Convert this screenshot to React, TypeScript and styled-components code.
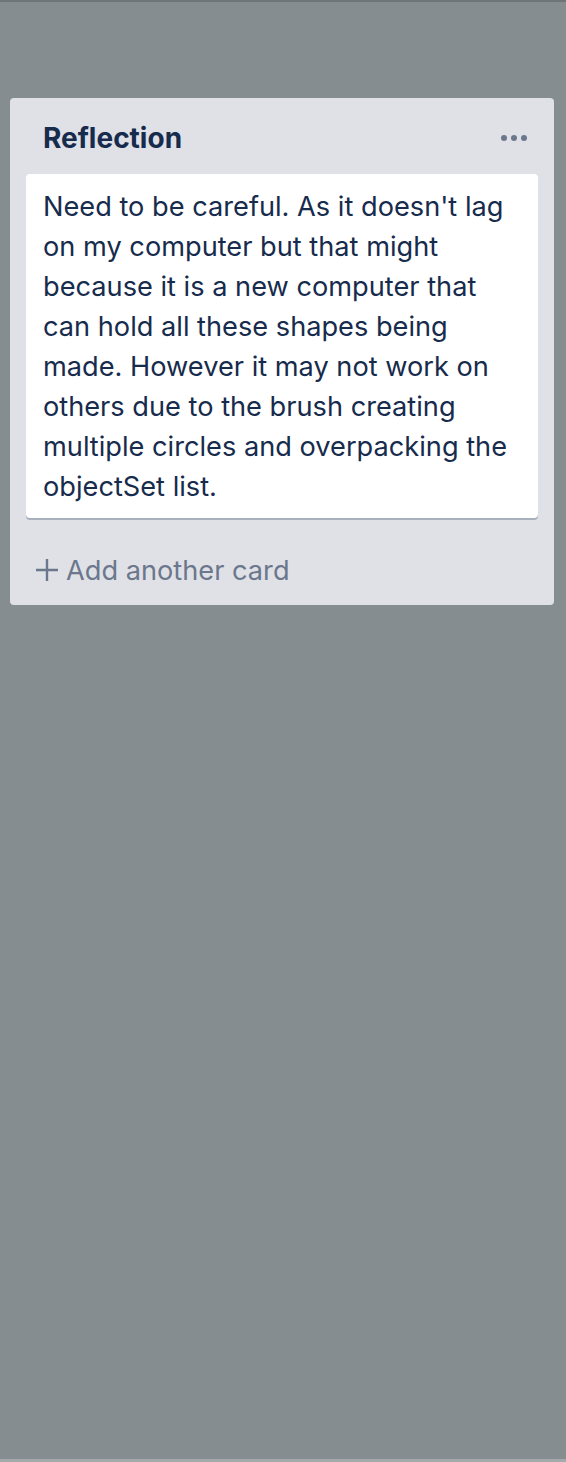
import React from "react";
import styled, { createGlobalStyle } from "styled-components";

const Global = createGlobalStyle`
  html, body { margin: 0; padding: 0; }
  body {
    background: #868d90;
    font-family: Inter, "Noto Sans", "Liberation Sans", sans-serif;
  }
`;

const Page = styled.div`
  width: 566px;
  height: 1462px;
  box-sizing: border-box;
  background: #868d90;
  border-top: 2px solid #6f7478;
  border-bottom: 3px solid #a4a9ab;
  padding: 96px 12px 0 10px;
`;

const List = styled.section`
  background: #dfe1e6;
  border-radius: 4px;
  display: flex;
  flex-direction: column;
  padding: 0 16px;
`;

const Header = styled.header`
  display: flex;
  align-items: center;
  justify-content: space-between;
  box-sizing: border-box;
  height: 76px;
  padding: 4px 11px 0 17px;
`;

const Title = styled.h2`
  margin: 0;
  font-size: 28px;
  font-weight: 700;
  color: #172b4d;
`;

const MenuDots = styled.span`
  display: flex;
  gap: 4px;
  span {
    width: 6px;
    height: 6px;
    border-radius: 50%;
    background: #6b778c;
  }
`;

const Card = styled.article`
  background: #fff;
  border-radius: 4px;
  box-shadow: 0 2px 0 #a9b0bd;
  padding: 13px 22px 11px 17px;
  font-size: 27.2px;
  line-height: 40px;
  color: #172b4d;
`;

const AddCard = styled.div`
  display: flex;
  align-items: center;
  gap: 6px;
  box-sizing: border-box;
  height: 87px;
  padding: 17px 0 0 8px;
  color: #6b778c;
  font-size: 27.2px;
`;

export default function App() {
  return (
    <>
      <Global />
      <Page>
        <List>
          <Header>
            <Title>Reflection</Title>
            <MenuDots>
              <span />
              <span />
              <span />
            </MenuDots>
          </Header>
          <Card>
            Need to be careful. As it doesn't lag on my computer but that might
            because it is a new computer that can hold all these shapes being
            made. However it may not work on others due to the brush creating
            multiple circles and overpacking the objectSet list.
          </Card>
          <AddCard>
            <svg width="26" height="26" viewBox="0 0 26 26">
              <path d="M13 2v22M2 13h22" stroke="#6b778c" strokeWidth="2.4" />
            </svg>
            Add another card
          </AddCard>
        </List>
      </Page>
    </>
  );
}
